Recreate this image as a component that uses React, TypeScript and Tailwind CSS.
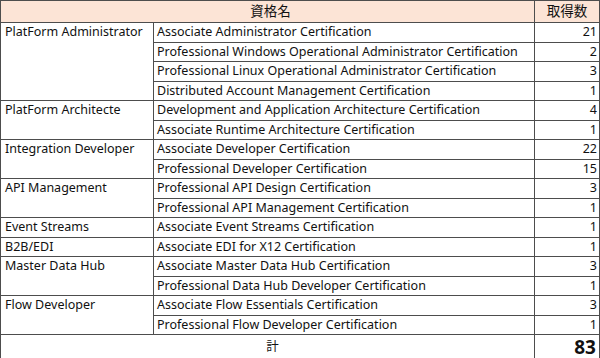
const groups: { name: string; items: [string, number][] }[] = [
  {
    name: 'PlatForm Administrator',
    items: [
      ['Associate Administrator Certification', 21],
      ['Professional Windows Operational Administrator Certification', 2],
      ['Professional Linux Operational Administrator Certification', 3],
      ['Distributed Account Management Certification', 1],
    ],
  },
  {
    name: 'PlatForm Architecte',
    items: [
      ['Development and Application Architecture Certification', 4],
      ['Associate Runtime Architecture Certification', 1],
    ],
  },
  {
    name: 'Integration Developer',
    items: [
      ['Associate Developer Certification', 22],
      ['Professional Developer Certification', 15],
    ],
  },
  {
    name: 'API Management',
    items: [
      ['Professional API Design Certification', 3],
      ['Professional API Management Certification', 1],
    ],
  },
  { name: 'Event Streams', items: [['Associate Event Streams Certification', 1]] },
  { name: 'B2B/EDI', items: [['Associate EDI for X12 Certification', 1]] },
  {
    name: 'Master Data Hub',
    items: [
      ['Associate Master Data Hub Certification', 3],
      ['Professional Data Hub Developer Certification', 1],
    ],
  },
  {
    name: 'Flow Developer',
    items: [
      ['Associate Flow Essentials Certification', 3],
      ['Professional Flow Developer Certification', 1],
    ],
  },
];

export default function App() {
  const total = groups.reduce((s, g) => s + g.items.reduce((t, i) => t + i[1], 0), 0);

  return (
    <div className="w-[600px] h-[358px] bg-white overflow-hidden">
      <table
        className="w-[599px] table-fixed border-collapse text-[12.5px] leading-none text-[#111]"
        style={{ fontFamily: '"Noto Sans", "Noto Sans CJK JP", sans-serif' }}
      >
        <colgroup>
          <col className="w-[153px]" />
          <col className="w-[381px]" />
          <col className="w-[65px]" />
        </colgroup>
        <thead>
          <tr className="h-[22px] bg-[#fce4d6] text-[13.5px]">
            <th colSpan={2} className="border border-[#4d4d4d] font-normal text-center pl-[6px]">
              資格名
            </th>
            <th className="border border-[#4d4d4d] font-normal text-center">取得数</th>
          </tr>
        </thead>
        <tbody>
          {groups.map((g) =>
            g.items.map(([cert, count], idx) => (
              <tr key={cert} className="h-[19.5px]">
                {idx === 0 && (
                  <td
                    rowSpan={g.items.length}
                    className="border border-[#4d4d4d] align-top pl-[4px] pt-[3px]"
                  >
                    {g.name}
                  </td>
                )}
                <td className="border border-[#4d4d4d] pl-[3px]">{cert}</td>
                <td className="border border-[#4d4d4d] text-right pr-[2px]">{count}</td>
              </tr>
            ))
          )}
          <tr className="h-[25px]">
            <td colSpan={2} className="border border-[#4d4d4d] text-center pl-[10px]">
              計
            </td>
            <td className="border border-[#4d4d4d] text-right pr-[3px] text-[19px] font-bold">
              {total}
            </td>
          </tr>
        </tbody>
      </table>
    </div>
  );
}
